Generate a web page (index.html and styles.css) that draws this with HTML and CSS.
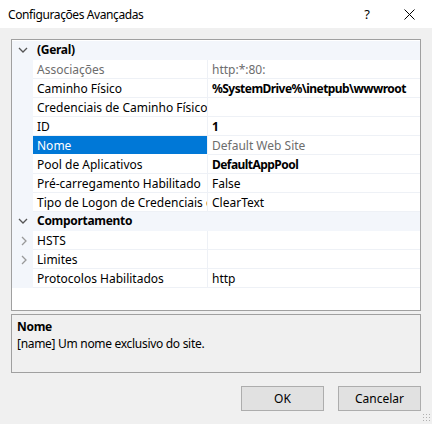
FILE: index.html
```html
<!DOCTYPE html>
<html>
<head>
<meta charset="utf-8">
<link rel="stylesheet" href="styles.css">
</head>
<body>
<div class="window">
  <div class="titlebar">
    <span class="title">Configurações Avançadas</span>
    <span class="help">?</span>
    <span class="close"><svg width="11" height="11" viewBox="0 0 11 11"><path d="M0.5 0.5 L10.5 10.5 M10.5 0.5 L0.5 10.5" stroke="#000" stroke-width="1" fill="none"/></svg></span>
  </div>
  <div class="body">
    <div class="grid">
      <div class="row cat">
        <span class="gut"><svg width="10" height="8" viewBox="0 0 10 8"><path d="M1 2 L5 6 L9 2" stroke="#555" stroke-width="1.3" fill="none"/></svg></span>
        <span class="catname">(Geral)</span>
      </div>
      <div class="row"><span class="gut"></span><span class="name dim">Associações</span><span class="val dim">http:*:80:</span></div>
      <div class="row"><span class="gut"></span><span class="name">Caminho Físico</span><span class="val b">%SystemDrive%\inetpub\wwwroot</span></div>
      <div class="row"><span class="gut"></span><span class="name">Credenciais de Caminho Físico</span><span class="val"></span></div>
      <div class="row"><span class="gut"></span><span class="name">ID</span><span class="val b">1</span></div>
      <div class="row"><span class="gut"></span><span class="name sel">Nome</span><span class="val dim">Default Web Site</span></div>
      <div class="row"><span class="gut"></span><span class="name">Pool de Aplicativos</span><span class="val b">DefaultAppPool</span></div>
      <div class="row"><span class="gut"></span><span class="name">Pré-carregamento Habilitado</span><span class="val">False</span></div>
      <div class="row"><span class="gut"></span><span class="name">Tipo de Logon de Credenciais de</span><span class="val">ClearText</span></div>
      <div class="row cat">
        <span class="gut"><svg width="10" height="8" viewBox="0 0 10 8"><path d="M1 2 L5 6 L9 2" stroke="#555" stroke-width="1.3" fill="none"/></svg></span>
        <span class="catname">Comportamento</span>
      </div>
      <div class="row"><span class="gut"><svg width="8" height="10" viewBox="0 0 8 10"><path d="M2 1 L6 5 L2 9" stroke="#999" stroke-width="1.3" fill="none"/></svg></span><span class="name">HSTS</span><span class="val"></span></div>
      <div class="row"><span class="gut"><svg width="8" height="10" viewBox="0 0 8 10"><path d="M2 1 L6 5 L2 9" stroke="#999" stroke-width="1.3" fill="none"/></svg></span><span class="name">Limites</span><span class="val"></span></div>
      <div class="row"><span class="gut"></span><span class="name">Protocolos Habilitados</span><span class="val">http</span></div>
    </div>
    <div class="desc">
      <div class="desc-title">Nome</div>
      <div class="desc-text">[name] Um nome exclusivo do site.</div>
    </div>
    <div class="buttons">
      <button class="btn">OK</button>
      <button class="btn">Cancelar</button>
    </div>
  </div>
  <div class="grip"></div>
</div>
</body>
</html>
```

FILE: styles.css
```css
* { box-sizing: border-box; }
html, body { margin: 0; padding: 0; }
body {
  width: 432px;
  height: 424px;
  background: #f0f0f0;
  font-family: "Noto Sans", "Open Sans", sans-serif;
  font-size: 12px;
  color: #000;
  overflow: hidden;
}
.window { position: relative; width: 432px; height: 424px; }
.titlebar {
  height: 28px;
  background: #fff;
  display: flex;
  align-items: center;
  padding-left: 8px;
}
.title { flex: 1; font-size: 12px; letter-spacing: -0.4px; }
.help { width: 20px; text-align: center; margin-right: 27px; font-size: 13px; }
.close { width: 11px; height: 11px; margin-right: 17px; display: flex; }
.body { padding: 11px 11px 0 11px; }
.grid {
  height: 272px;
  background: #fff;
  border: 1px solid #a0a0a0;
  padding-top: 1px;
}
.row {
  display: flex;
  height: 19px;
  line-height: 18px;
}
.gut {
  width: 21px;
  flex: none;
  background: #f3f6fb;
  display: flex;
  align-items: center;
  justify-content: center;
  padding-left: 2px;
}
.row.cat { background: #f3f6fb; border-bottom: 1px solid #f3f6fb; }
.row.cat .gut { justify-content: flex-start; padding-left: 6px; }
.catname { font-weight: bold; padding-left: 4px; letter-spacing: -0.3px; }
.name {
  width: 175px;
  flex: none;
  padding-left: 4px;
  padding-top: 1px;
  white-space: nowrap;
  overflow: hidden;
  border-bottom: 1px solid #eef1f6;
  border-right: 1px solid #eef1f6;
}
.name.sel { background: #0078d7; color: #fff; border-bottom-color: #fff; }
.val {
  flex: 1;
  padding-left: 4px;
  padding-top: 1px;
  white-space: nowrap;
  overflow: hidden;
  border-bottom: 1px solid #eef1f6;
}
.dim { color: #6d6d6d; }
.name.sel.dim { color: #fff; }
.b { font-weight: bold; letter-spacing: -0.55px; }
.desc {
  margin-top: 3px;
  height: 59px;
  border: 1px solid #a0a0a0;
  padding: 4px 5px;
}
.desc-title { font-weight: bold; line-height: 16px; letter-spacing: -0.3px; }
.desc-text { line-height: 18px; letter-spacing: -0.3px; }
.buttons {
  display: flex;
  justify-content: flex-end;
  gap: 14px;
  margin-top: 13px;
}
.btn {
  width: 83px;
  height: 25px;
  background: #e1e1e1;
  border: 1px solid #adadad;
  font-family: inherit;
  font-size: 12px;
  color: #000;
  padding: 0;
}
.grip {
  position: absolute;
  right: 2px;
  bottom: 3px;
  width: 8px;
  height: 8px;
  background-image: radial-gradient(circle, #b0b0b0 0.8px, transparent 1px);
  background-size: 3px 3px;
}
```
